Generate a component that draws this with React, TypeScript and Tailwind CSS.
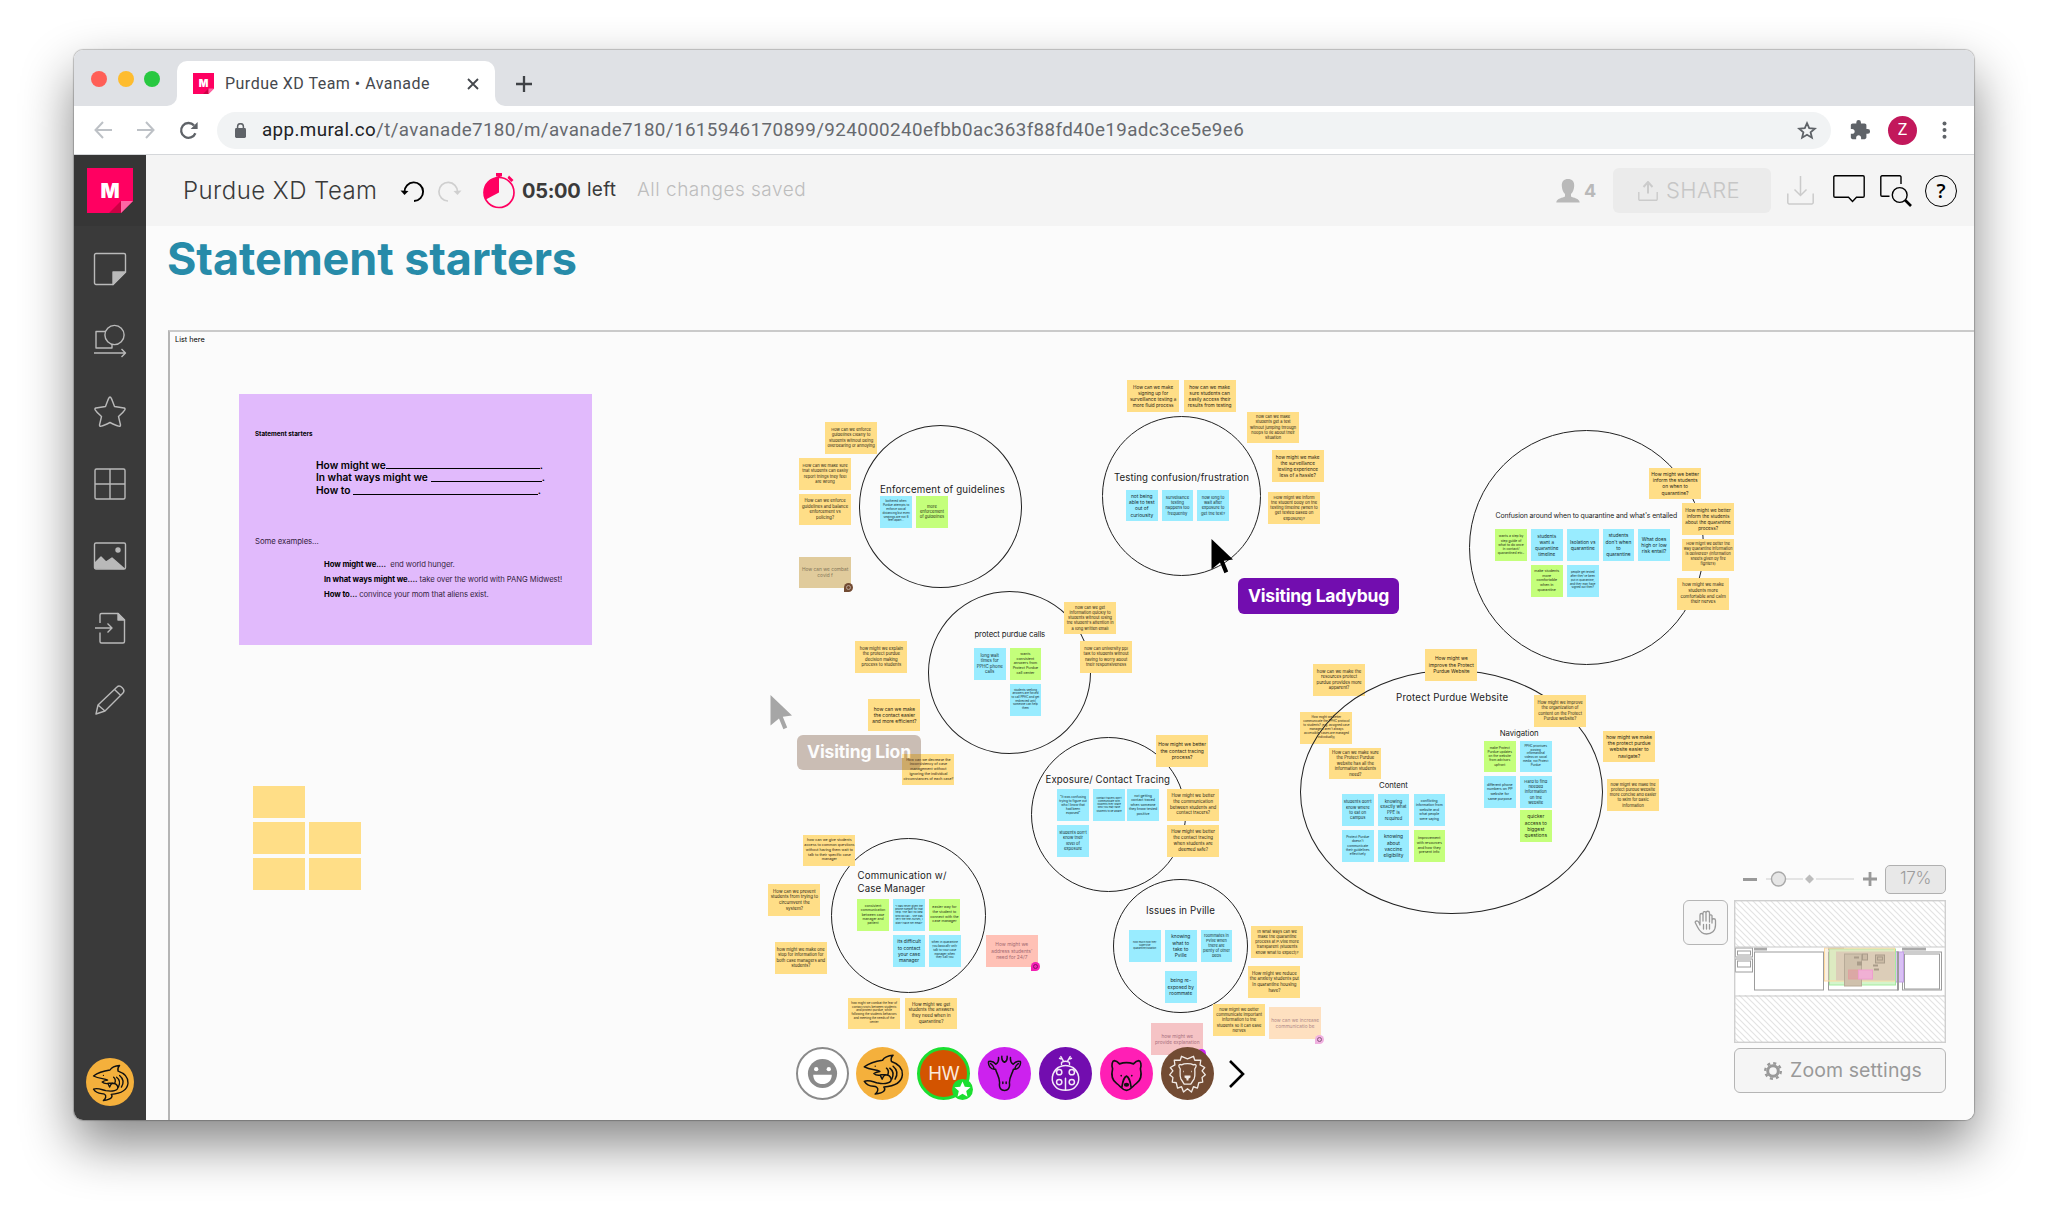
import React from "react";

type NoteData = [x: number, y: number, pitch: number, text: string];

const yellowUnder: NoteData[] = [
  [1313, 664, 5.6, "how can we make the|resources protect|purdue provides more|apparent?"],
  [1300.3, 712, 3.9, "How might we better|communicate the PPHC protocol|to students? (e.g. assigned case|managers aren't always|accessible, cases are managed|individually)"],
];

const yellow: NoteData[] = [
  [253, 786.3, 6, ""],
  [253, 822.2, 6, ""],
  [253, 858, 6, ""],
  [309.3, 822.2, 6, ""],
  [309.3, 858, 6, ""],
  [825, 422, 5.3, "How can we enforce|guidelines clearly to|students without being|overbearing or annoying"],
  [799, 458, 5.3, "How can we make sure|that students can easily|report things they feel|are wrong"],
  [799, 493.7, 5.5, "How can we enforce|guidelines and balance|enforcement vs|policing?"],
  [1064, 602, 5.2, "how can we get|information quickly to|students without losing|the student's attention in|a long written email"],
  [1080, 641, 5.3, "how can university ppl|talk to students without|having to worry about|their responsiveness"],
  [855.3, 641, 5.5, "how might we explain|the protect purdue|decision making|process to students"],
  [868.3, 699.4, 6.3, "how can we make|the contact easier|and more efficient?"],
  [902.3, 753.8, 4.7, "How can we decrease the|inconsistency of case|management without|ignoring the individual|circumstances of each case?"],
  [1127, 380.3, 6, "How can we make|signing up for|surveillance testing a|more fluid process"],
  [1183.5, 380.3, 6.2, "how can we make|sure students can|easily access their|results from testing"],
  [1247, 411.5, 5.2, "how can we make|students get a test|without jumping through|hoops to lie about their|situation"],
  [1271.6, 450.2, 6, "how might we make|the surveillance|testing experience|less of a hassle?"],
  [1268, 492, 5.3, "How might we inform|the student body on the|testing timeline (when to|get tested based on|exposure)?"],
  [1649, 467.5, 6.3, "How might we better|inform the students|on when to|quarantine?"],
  [1682, 503.3, 6, "How might we better|inform the students|about the quarantine|process?"],
  [1682, 539, 4.9, "How might we better the|way quarantine information|is delivered? (information|sheets given by fire|fighters)"],
  [1677, 578, 5.7, "how might we make|students more|comfortable and calm|their nerves"],
  [1425.3, 649, 6.3, "How might we|improve the Protect|Purdue Website"],
  [1329.3, 747.5, 5.5, "How can we make sure|the Protect Purdue|website has all the|information students|need?"],
  [1534, 695, 5.4, "How might we improve|the organization of|content on the Protect|Purdue website?"],
  [1603, 730.7, 6.3, "how might we make|the protect purdue|website easier to|navigate?"],
  [1607, 779, 5.2, "how might we make the|protect purdue website|more concise and easier|to skim for basic|information"],
  [1156, 735, 6.3, "How might we better|the contact tracing|process?"],
  [1167, 789, 5.7, "How might we better|the communication|between students and|contact tracers?"],
  [1167, 825, 5.8, "How might we better|the contact tracing|when students are|deemed safe?"],
  [803.3, 834.5, 4.7, "how can we give students|access to common questions|without having them wait to|talk to their specific case|manager"],
  [768.3, 884.3, 5.7, "How can we prevent|students from trying to|circumvent the|system?"],
  [774.7, 942, 5.4, "how might we make one|stop for information for|both case managers and|students?"],
  [848, 997.5, 3.8, "how might we combat the fear of|contact/visits between students|and protect purdue, while|following the students behaviors|and meeting the needs of the|center"],
  [905, 997.5, 5.8, "How might we get|students the answers|they need when in|quarantine?"],
  [1251, 926, 5.2, "In what ways can we|make the quarantine|process at P.Ville more|transparent (students|know what to expect)?"],
  [1248.3, 966.3, 5.6, "How might we reduce|the anxiety students put|in quarantine housing|have?"],
  [1213, 1004.2, 5.3, "how might we better|communicate important|information to the|students so it can ease|nerves"],
];

const blue: NoteData[] = [
  [880.3, 496, 3.8, "bothered when|Purdue attempts to|enforce social|distancing but even|seatings are not 6|feet apart..."],
  [974, 648, 5.6, "long wait|times for|PPHC phone|calls"],
  [1009.7, 684, 3.7, "students seeking|answers are forced|to call PPHC and get|redirected until|someone can help|them"],
  [1126, 489.5, 6.3, "not being|able to test|out of|curiousity"],
  [1161.7, 489.5, 5.3, "surveillance|testing|happens too|frequently"],
  [1197.3, 489.5, 5.3, "how long to|wait after|exposure to|get the test?"],
  [1531, 529.3, 6, "students|want a|quarantine|timeline"],
  [1567, 529.3, 6.2, "Isolation vs|quarantine"],
  [1602.7, 529.3, 6.3, "students|don't when|to|quarantine"],
  [1638.3, 529.3, 6.3, "What does|high or low|risk entail?"],
  [1567, 565, 3.7, "people get tested|after they've been|put in quarantine,|and they may have|signed out then?"],
  [1520, 740.5, 3.8, "PPHC prioritizes|posting|informational|videos on social|media, not Protect|Purdue"],
  [1484, 776.3, 4.6, "different phone|numbers on PP|website for|same purpose"],
  [1520, 776.3, 5.3, "Hard to find|needed|information|on the|website"],
  [1342, 794.3, 5.3, "students don't|know where|to eat on|campus"],
  [1377.7, 794.3, 5.7, "knowing|exactly what|PPE is|required"],
  [1413.5, 794.3, 4.4, "conflicting|information from|website and|what people|were saying"],
  [1342, 830, 4.2, "Protect Purdue|doesn't|communicate|their guidelines|effectively"],
  [1377.7, 830, 6.2, "knowing|about|vaccine|eligibility"],
  [1057.3, 789, 4.1, "\"It was confusing|trying to figure out|who I know that|had been|exposed\""],
  [1093.3, 789, 3.3, "contact tracers don't|communicate with|students they share|who you may have|students to be aware"],
  [1127.3, 789, 4.5, "not getting|contact traced|when someone|they know tested|positive"],
  [1057.3, 825, 5.3, "students don't|know their|level of|exposure"],
  [893.3, 899, 3.4, "\"I was never given the|phone number for that|help. The fact no idea|who do call... she was|very the tele-nurses, I|didn't have her email\""],
  [893.3, 935, 6.2, "its difficult|to contact|your case|manager"],
  [929, 935, 3.8, "when in quarantine|you basically only|talk to your case|manager when|they call you"],
  [1129, 930, 3.2, "how much how they|supervise|quarantine/isolation"],
  [1165, 930, 6.2, "knowing|what to|take to|Pville"],
  [1200.7, 930, 5, "roommates in|Pville when|there are|plenty of other|beds"],
  [1165, 971, 6.2, "being re-|exposed by|roommate"],
];

const green: NoteData[] = [
  [916.2, 496, 5.2, "more|enforcement|of guidelines"],
  [1009.7, 648, 4.7, "wants|consistent|answers from|Protect Purdue|call center"],
  [1495.3, 529.3, 4.3, "wants a step by|step guide of|what to do once|in contact/|quarantined etc.."],
  [1531, 565, 4.7, "make students|more|comfortable|when in|quarantine"],
  [1484, 740.5, 4.2, "make Protect|Purdue updates|on the website|from advisors|upfront"],
  [1520, 810.2, 6.3, "quicker|access to|biggest|questions"],
  [1413.5, 830, 4.7, "improvement|with resources|and how they|present info"],
  [857.3, 899, 4.4, "consistent|communication|between case|manager and|patient"],
  [928.7, 899, 4.7, "easier way for|the student to|connect with the|case manager"],
];

const circles: [number, number, number, number][] = [
  [858.6, 425, 163.5, 163],
  [928.2, 590.7, 163.3, 163],
  [1101.6, 416.3, 159.4, 159.4],
  [1469, 429.5, 235.4, 235.4],
  [1300, 669.5, 303, 244.5],
  [1031, 737.3, 155, 155],
  [831, 838.3, 155, 155],
  [1113.4, 879, 134.3, 134.3],
];

/* x, baseline, font size, letter spacing, text */
const labels: [number, number, number, number, string][] = [
  [880, 493, 9.7, 0.2, "Enforcement of guidelines"],
  [974.5, 637.5, 7.8, -0.15, "protect purdue calls"],
  [1114, 481.5, 9.7, 0.09, "Testing confusion/frustration"],
  [1495.5, 519.3, 6.9, -0.12, "Confusion around when to quarantine and what's entailed"],
  [1396, 701, 9.7, 0.2, "Protect Purdue Website"],
  [1499.7, 736, 7.8, -0.03, "Navigation"],
  [1379, 788.5, 7.8, -0.05, "Content"],
  [1045.5, 783, 9.7, 0.1, "Exposure/ Contact Tracing"],
  [857.5, 879, 9.7, 0.2, "Communication w/"],
  [857.5, 892, 9.7, 0.1, "Case Manager"],
  [1146, 914.5, 9.7, 0.12, "Issues in Pville"],
];

function Note({ data, kind }: { data: NoteData; kind: string }) {
  const [x, y, pitch, text] = data;
  return (
    <div
      className={`absolute flex h-[31.5px] flex-col items-center justify-center whitespace-nowrap text-center ${kind}`}
      style={{ left: x, top: y, fontSize: pitch * 0.775, lineHeight: `${pitch}px` }}
    >
      {text.split("|").map((line, i) => (
        <span key={i}>{line}</span>
      ))}
    </div>
  );
}

const YELLOW = "w-[52.2px] bg-[#ffde87] text-[#2b2413]";
const BLUE = "w-[31.5px] bg-[#99ecff] text-[#132b30]";
const GREEN = "w-[31.5px] bg-[#c4ff7b] text-[#1f2b12]";

function Shark({ className }: { className: string }) {
  return (
    <svg viewBox="0 0 160 160" className={className} fill="none" stroke="#111" strokeWidth="4.5" strokeLinejoin="round" strokeLinecap="round">
      <circle cx="80" cy="80" r="80" fill="#f4b03c" stroke="none" />
      <path d="M25 60C38 50 58 43 80 40C86 30 98 26 112 25C106 31 105 38 107 44C128 51 141 66 140 84C138 104 118 118 84 121C90 128 88 138 58 142C66 135 69 126 62 121C54 116 38 124 25 104C38 98 50 105 66 109C88 113 108 109 106 96C102 84 92 84 88 84C84 86 80 94 79 97L73 85C66 86 58 84 54 80C60 76 64 75 72 74C62 68 44 70 25 60Z" />
      <path d="M96 84C99 76 97 68 92 64M108 97C114 84 113 72 102 64M118 97C127 82 124 68 112 58M75 84h12" />
      <circle cx="58" cy="58" r="2" fill="#111" stroke="none" />
    </svg>
  );
}

function Logo({ className }: { className: string }) {
  return (
    <span className={`relative flex items-center justify-center ${className}`}>
      <svg viewBox="0 0 46 45" preserveAspectRatio="none" className="absolute inset-0 h-full w-full">
        <path d="M0 0H46V33L34 45H0Z" fill="#ff0061" />
        <path d="M22 45L34 33V45Z" fill="#cc0044" />
        <path d="M34 33H46L34 45Z" fill="#ff66a5" />
      </svg>
      <span className="relative">M</span>
    </span>
  );
}

function Pointer({ x, y, color }: { x: number; y: number; color: string }) {
  return (
    <svg className={`absolute h-[36px] w-[23px] ${color}`} style={{ left: x, top: y }} viewBox="0 0 23 36" fill="currentColor">
      <path d="M.5 0L22 20.5L12.8 21.8L17.2 32.4L13.4 34.2L9 23.4L.5 30.5Z" />
    </svg>
  );
}

function TabStrip() {
  return (
    <div className="flex h-[56px] shrink-0 items-end bg-[#dfe1e5] font-[Roboto,sans-serif]">
      <div className="flex h-[56px] w-[93px] items-center gap-[10.5px] pl-[17px] pt-0.5">
        <span className="size-4 rounded-full bg-[#ff5f57]" />
        <span className="size-4 rounded-full bg-[#febc2e]" />
        <span className="size-4 rounded-full bg-[#28c840]" />
      </div>
      <div className="size-[10px] bg-white"><div className="size-[10px] rounded-br-[10px] bg-[#dfe1e5]" /></div>
      <div className="flex h-[45px] w-[318px] items-center rounded-t-[10px] bg-white pl-4">
        <Logo className="h-[21px] w-[21px] font-[Inter,sans-serif] text-[10px] font-black text-white" />
        <span className="ml-[11px] w-[242px] whitespace-nowrap text-[16px] tracking-[0.48px] text-[#45484d]">Purdue XD Team • Avanade</span>
        <svg className="size-3 shrink-0" viewBox="0 0 12 12" stroke="#45484d" strokeWidth="1.8"><path d="M1 1L11 11M11 1L1 11" /></svg>
      </div>
      <div className="size-[10px] bg-white"><div className="size-[10px] rounded-bl-[10px] bg-[#dfe1e5]" /></div>
      <svg className="mb-[14px] ml-[11px] size-4" viewBox="0 0 16 16" stroke="#3f4246" strokeWidth="2.3"><path d="M8 0V16M0 8H16" /></svg>
    </div>
  );
}

function AddressBar() {
  return (
    <div className="flex h-[49px] shrink-0 items-center border-b border-[#d5d7da] bg-white font-[Roboto,sans-serif]">
      <svg className="ml-[20px] h-[18px] w-[18px]" viewBox="0 0 18 18" fill="none" stroke="#bdc1c6" strokeWidth="2"><path d="M18 9H1.5M9 1L1.5 9L9 17" /></svg>
      <svg className="ml-[25px] h-[18px] w-[18px]" viewBox="0 0 18 18" fill="none" stroke="#bdc1c6" strokeWidth="2"><path d="M0 9H16.5M9 1L16.5 9L9 17" /></svg>
      <svg className="ml-[24px] h-[19px] w-[19px]" viewBox="0 0 19 19" fill="none" stroke="#5f6368" strokeWidth="2.3"><path d="M16.4 12.2A7.4 7.4 0 1 1 15 4.4" /><path d="M18.6 1V8H11.6Z" fill="#5f6368" stroke="none" /></svg>
      <div className="ml-[19px] flex h-[37px] w-[1614px] items-center rounded-full bg-[#f1f3f4]">
        <svg className="ml-[18px] h-[15px] w-[11px]" viewBox="0 0 11 15" fill="#5f6368"><rect y="5" width="11" height="10" rx="1.4" /><path d="M2.6 6V3.6a2.9 2.9 0 0 1 5.8 0V6" fill="none" stroke="#5f6368" strokeWidth="1.5" /></svg>
        <span className="ml-4 flex-1 whitespace-nowrap pt-px text-[18.8px] tracking-[0.39px] text-[#66696e]"><span className="text-[#202124]">app.mural.co</span>/t/avanade7180/m/avanade7180/1615946170899/924000240efbb0ac363f88fd40e19adc3ce5e9e6</span>
        <svg className="mr-[14px] h-[19px] w-[20px]" viewBox="0 0 20 19" fill="none" stroke="#5f6368" strokeWidth="1.8"><path d="M10 2.2L12.2 7.2L17.8 7.7L13.6 11.3L14.9 16.7L10 13.8L5.1 16.7L6.4 11.3L2.2 7.7L7.8 7.2Z" /></svg>
      </div>
      <svg className="ml-[18px] size-[22px]" viewBox="0 0 24 24" fill="#5f6368"><path d="M20.5 11H19V7c0-1.1-.9-2-2-2h-4V3.5a2.5 2.5 0 0 0-5 0V5H4c-1.1 0-2 .9-2 2v3.8h1.5c1.5 0 2.7 1.2 2.7 2.7S5 16.2 3.5 16.2H2V20c0 1.1.9 2 2 2h3.8v-1.5c0-1.5 1.2-2.7 2.7-2.7s2.7 1.2 2.7 2.7V22H17c1.1 0 2-.9 2-2v-4h1.5a2.5 2.5 0 0 0 0-5z" /></svg>
      <span className="ml-[17px] flex size-[29px] items-center justify-center rounded-full bg-[#c2185b] text-[16px] text-white">Z</span>
      <svg className="ml-[25px] h-[18px] w-[5px]" viewBox="0 0 5 18" fill="#5f6368"><circle cx="2.5" cy="2.5" r="2" /><circle cx="2.5" cy="9" r="2" /><circle cx="2.5" cy="15.8" r="2" /></svg>
    </div>
  );
}

function Tool({ children }: { children: React.ReactNode }) {
  return (
    <div className="flex h-[71.8px] items-center justify-center">
      <svg className="size-[34px]" viewBox="0 0 34 34" fill="none" stroke="#b9b9b9" strokeWidth="1.4" strokeLinejoin="round">{children}</svg>
    </div>
  );
}

function Sidebar() {
  return (
    <div className="flex w-[72px] shrink-0 flex-col bg-[#3a3a3a]">
      <div className="flex h-[71px] shrink-0 items-center justify-center bg-[#363636]">
        <Logo className="h-[45px] w-[46px] font-[Inter,sans-serif] text-[20px] font-black text-white" />
      </div>
      <div className="flex flex-col pt-[7px]">
        <Tool><path d="M3 1.5H31a1.5 1.5 0 0 1 1.5 1.5V20L20 32.5H3A1.5 1.5 0 0 1 1.5 31V3A1.5 1.5 0 0 1 3 1.5Z" /><path d="M20 20H32.5L20 32.5Z" fill="#b9b9b9" /></Tool>
        <Tool><path d="M13 7.5H3V24H19V20" /><circle cx="21.5" cy="11" r="9.6" /><path d="M1 29H32M28.5 25L32.5 29L28.5 33" /></Tool>
        <Tool><path d="M17 2C18 2 18.4 3 21.5 11.5L31 13C33 13.5 33 14.5 25.5 21.5L27.5 30C27.5 32 26 32 17 27.5C8 32 6.5 32 6.5 30L8.5 21.5C1 14.5 1 13.5 3 13L12.5 11.5C15.6 3 16 2 17 2Z" /></Tool>
        <Tool><rect x="2" y="2" width="30" height="30" rx="1.5" /><path d="M17 2V32M2 17H32" /></Tool>
        <Tool><rect x="1.5" y="4" width="31" height="26" rx="1.5" /><path d="M2 29V24L8 18L13 23L19 19L31 29.5Z" fill="#b9b9b9" /><circle cx="25" cy="11" r="2" fill="#b9b9b9" /></Tool>
        <Tool><path d="M7 12V4A1.5 1.5 0 0 1 8.5 2.5H25L31.5 9V30.5A1.5 1.5 0 0 1 30 32H8.5A1.5 1.5 0 0 1 7 30.5V21.5M2 17H19M14.5 12.5L19 17L14.5 21.5" /><path d="M25 2.5V9H31.5Z" fill="#b9b9b9" /></Tool>
        <Tool><path d="M3 31L5 22L24 4C27 1 33 7 30 10L12 28L3 31ZM21.5 6.5L27.8 12.5M5 22L12 28" /></Tool>
      </div>
      <div className="mt-auto flex justify-center pb-[14px]"><Shark className="size-[48px]" /></div>
    </div>
  );
}

function Header() {
  return (
    <div className="flex h-[71px] shrink-0 items-center whitespace-nowrap bg-[#f4f4f4] pl-[37px] text-[#3a3a3a]">
      <span className="w-[217px] text-[24px] font-light tracking-[0.45px]">Purdue XD Team</span>
      <svg className="h-[22px] w-[25px]" viewBox="0 0 25 22" fill="none" stroke="#000" strokeWidth="1.9"><path d="M4.5 12A9.3 9.3 0 1 1 14 21" /><path d="M.5 10.5L4.5 15L8.5 11Z" fill="#000" stroke="none" /></svg>
      <svg className="ml-[12px] h-[22px] w-[25px]" viewBox="0 0 25 22" fill="none" stroke="#cfcfcf" strokeWidth="1.7"><path d="M20.5 12A9.3 9.3 0 1 0 11 21" /><path d="M24.5 10.5L20.5 15L16.5 11Z" fill="#cfcfcf" stroke="none" /></svg>
      <svg className="ml-[21px] h-[36px] w-[32px]" viewBox="0 0 32 36"><circle cx="16" cy="19.5" r="15" fill="none" stroke="#ff0061" strokeWidth="1.7" /><path d="M16 19.5V4.5A15 15 0 0 0 2.8 26.5Z" fill="#ff0061" /><path d="M13 0h6v3.5h-1.5V5h-3V3.5H13ZM26 2.5L30.5 7L28.5 9L24.5 5Z" fill="#ff0061" /></svg>
      <span className="ml-[7px] w-[65px] text-[20px] font-bold tracking-[-0.3px]">05:00</span>
      <span className="w-[50px] text-[19px] font-normal tracking-[0.25px]">left</span>
      <span className="text-[19px] font-light tracking-[0.5px] text-[#bdbdbd]">All changes saved</span>
      <div className="ml-auto flex items-center pr-[17px]">
        <svg className="h-[24px] w-[24px]" viewBox="0 0 24 24" fill="#b9b9b9"><path d="M12 0C8 0 5.5 2.5 5.8 7C6 11 7.5 13.5 9 15V17.5C7 19 .5 19 .3 23.5H23.7C23.5 19 17 19 15 17.5V15C16.5 13.5 18 11 18.2 7C18.5 2.5 16 0 12 0Z" /></svg>
        <span className="ml-1 w-[29px] text-[18px] font-bold text-[#b9b9b9]">4</span>
        <div className="flex h-[45px] w-[158px] items-center rounded-md bg-[#ebebeb] pl-[25px] text-[#c6c6c6]">
          <svg className="h-[20px] w-[20px]" viewBox="0 0 20 20" fill="none" stroke="#cbcbcb" strokeWidth="1.4"><path d="M.8 11V18A1.2 1.2 0 0 0 2 19.3H18A1.2 1.2 0 0 0 19.2 18V11" /><path d="M10 12.5V3M5.5 6L10 1L14.5 6" strokeWidth="2" /></svg>
          <span className="ml-2 text-[22px] font-light tracking-[0.4px]">SHARE</span>
        </div>
        <svg className="ml-4 h-[29px] w-[27px]" viewBox="0 0 27 29" fill="none" stroke="#cbcbcb" strokeWidth="1.5"><path d="M.8 17.5V26.5A1.5 1.5 0 0 0 2.3 28H24.7A1.5 1.5 0 0 0 26.2 26.5V17.5M13.5 0V19.5M7.5 13.5L13.5 19.5L19.5 13.5" /></svg>
        <svg className="ml-[19px] h-[32px] w-[32px]" viewBox="0 0 32 32" fill="none" stroke="#000" strokeWidth="1.4"><path d="M2 .8H30A1.2 1.2 0 0 1 31.2 2V21A1.2 1.2 0 0 1 30 22.2H23.5L19.5 26.5L15.5 22.2H2A1.2 1.2 0 0 1 .8 21V2A1.2 1.2 0 0 1 2 .8Z" /></svg>
        <svg className="ml-[15px] h-[32px] w-[32px]" viewBox="0 0 32 32" fill="none" stroke="#000" strokeWidth="1.4"><path d="M21 9V2A1.2 1.2 0 0 0 19.8.8H2A1.2 1.2 0 0 0 .8 2V20A1.2 1.2 0 0 0 2 21.2H9.5" /><circle cx="19.7" cy="20" r="7.4" /><path d="M25 25L31 31" strokeWidth="2.6" /></svg>
        <span className="ml-[13px] flex size-[32px] items-center justify-center rounded-full border-[1.5px] border-black font-[Open_Sans,sans-serif] text-[20px] font-semibold text-black">?</span>
      </div>
    </div>
  );
}

function PurpleCard() {
  return (
    <div className="absolute left-[239px] top-[394px] h-[251px] w-[353px] whitespace-nowrap bg-[#e1bafc] pl-4 text-black">
      <p className="mt-[36px] text-[6.3px] font-bold leading-[9px]">Statement starters</p>
      <div className="mt-[19.5px] pl-[61px] text-[10.2px] font-semibold leading-[12.9px]">
        <p className="flex w-[227px] items-end">How might we<span className="mb-[2px] h-px flex-1 bg-black" />.</p>
        <p className="flex w-[229px] items-end">In what ways might we<span className="mb-[2px] ml-[3px] h-px flex-1 bg-black" />.</p>
        <p className="flex w-[225px] items-end">How to<span className="mb-[2px] ml-[3px] h-px flex-1 bg-black" />.</p>
      </div>
      <p className="mt-[38px] text-[7.8px] leading-[12px] tracking-[-0.1px] text-[#35243f]">Some examples...</p>
      <div className="mt-[10px] pl-[69px] text-[7.7px] leading-[15px] tracking-[-0.08px] text-[#35243f]">
        <p><b className="font-bold text-black">How might we....</b>&nbsp; end world hunger.</p>
        <p><b className="font-bold text-black">In what ways might we....</b> take over the world with PANG Midwest!</p>
        <p><b className="font-bold text-black">How to...</b> convince your mom that aliens exist.</p>
      </div>
    </div>
  );
}

function Circle({ c }: { c: [number, number, number, number] }) {
  return <div className="absolute rounded-[50%] border border-[#222]" style={{ left: c[0], top: c[1], width: c[2], height: c[3] }} />;
}

function Board() {
  return (
    <div className="absolute -left-[146px] -top-[226px] h-[1120px] w-[1974px]">
      <h1 className="absolute left-[167px] top-[229px] whitespace-nowrap text-[45px] font-bold leading-[60px] tracking-[-0.1px] text-[#278ba9]">Statement starters</h1>
      <div className="absolute left-[168px] top-[330px] h-[800px] w-[1820px] border-l-2 border-t-2 border-l-[#b5b5b5] border-t-[#cacaca]">
        <span className="absolute left-[5px] top-[2.5px] whitespace-nowrap text-[7.3px] leading-[10px] text-black">List here</span>
      </div>
      <PurpleCard />
      {yellowUnder.map((n, i) => <Note key={i} data={n} kind={YELLOW} />)}
      {circles.map((c, i) => <Circle key={i} c={c} />)}
      {yellow.map((n, i) => <Note key={i} data={n} kind={YELLOW} />)}
      {blue.map((n, i) => <Note key={i} data={n} kind={BLUE} />)}
      {green.map((n, i) => <Note key={i} data={n} kind={GREEN} />)}
      <Note data={[799, 556.5, 6.2, "How can we combat|covid f"]} kind="w-[52.2px] bg-[#e0cb9c] text-[#85775a]" />
      <Note data={[985.7, 935, 6.3, "How might we|address students'|need for 24/7"]} kind="w-[52.2px] bg-[#ffc1b6] text-[#a36a72]" />
      <Note data={[1269, 1007.3, 6.2, "how can we increase|communicatio be"]} kind="w-[52.2px] bg-[#fee0c0] text-[#b08a8a]" />
      <Note data={[1151.2, 1023, 6.2, "how might we|provide explanation"]} kind="w-[52.2px] bg-[#f5c3c5] text-[#a9717f]" />
      <span className="absolute left-[844px] top-[583px] size-[9px] rounded-full rounded-bl-none bg-[#724b33]"><span className="absolute inset-[2px] rounded-full border border-[#b9a496]" /></span>
      <span className="absolute left-[1031px] top-[962px] size-[9px] rounded-full rounded-bl-none bg-[#f31fb3]"><span className="absolute inset-[2px] rounded-full border border-[#8a1268]" /></span>
      <span className="absolute left-[1315px] top-[1035px] size-[9px] rounded-full rounded-bl-none bg-[#f0b0e0]"><span className="absolute inset-[2px] rounded-full border border-[#8a5a80]" /></span>
      <span className="absolute left-[1197px] top-[1049px] size-[9px] rounded-full bg-[#cc22ee]" />
      {labels.map(([x, base, size, track, text]) => (
        <span key={text} className="absolute whitespace-nowrap text-[#1c1c1c]" style={{ left: x, top: base - 13.5, fontSize: size, letterSpacing: track, lineHeight: "20px" }}>{text}</span>
      ))}
      <Pointer x={770} y={695} color="text-[#a6a6a6]" />
      <div className="absolute left-[797px] top-[735px] flex h-[35px] w-[124px] items-center justify-center rounded-[6px] bg-[#724b33] text-[17.5px] font-bold tracking-[-0.15px] text-white opacity-35">Visiting Lion</div>
      <Pointer x={1211} y={539} color="text-black" />
      <div className="absolute left-[1238px] top-[578px] flex h-[36px] w-[161px] items-center justify-center rounded-[6px] bg-[#720daf] text-[17.5px] font-bold tracking-[-0.2px] text-white">Visiting Ladybug</div>
    </div>
  );
}

function Avatars() {
  return (
    <div className="absolute left-[649.5px] top-[821px] flex items-center gap-[7.9px]">
      <svg className="size-[53px]" viewBox="0 0 160 160"><circle cx="80" cy="80" r="77" fill="#fff" stroke="#8a8a8a" strokeWidth="6" /><circle cx="80" cy="80" r="44" fill="#8a8a8a" /><circle cx="61" cy="67" r="6.5" fill="#fff" /><circle cx="99" cy="67" r="6.5" fill="#fff" /><path d="M52 84H108C108 103 95 112 80 112S52 103 52 84Z" fill="#fff" /></svg>
      <Shark className="size-[53px]" />
      <span className="relative flex size-[53px] items-center justify-center rounded-full border-[3px] border-[#1bdf30] bg-[#d35400] text-[18.5px] tracking-[-0.4px] text-[#fbe9dc]">
        HW
        <svg className="absolute -bottom-[3px] -right-[6px] size-[21px]" viewBox="0 0 21 21"><circle cx="10.5" cy="10.5" r="10.5" fill="#1bdf30" /><path d="M10.5 2.5L12.8 7.8L18.5 8.3L14.2 12.1L15.5 17.8L10.5 14.8L5.5 17.8L6.8 12.1L2.5 8.3L8.2 7.8Z" fill="#fff" /></svg>
      </span>
      <svg className="size-[53px]" viewBox="0 0 160 160" fill="none" stroke="#111" strokeWidth="4.5" strokeLinecap="round" strokeLinejoin="round"><circle cx="80" cy="80" r="80" fill="#cc22ee" stroke="none" /><path d="M72 28C71 38 72 43 80 46C88 43 89 38 88 28M62 32C63 42 60 48 54 52M98 32C97 42 100 48 106 52M54 52C49 46 40 42 32 44C30 56 38 69 53 67C57 82 67 94 65 110C63 125 70 131 80 131S97 125 95 110C93 94 103 82 107 67C122 69 130 56 128 44C120 42 111 46 106 52M38 50C44 54 47 58 48 63M122 50C116 54 113 58 112 63" /><path d="M75 106V110M85 106V110" /></svg>
      <svg className="size-[53px]" viewBox="0 0 160 160" fill="none" stroke="#f3eaf8" strokeWidth="4.5" strokeLinecap="round"><circle cx="80" cy="80" r="80" fill="#720daf" stroke="none" /><path d="M68 52C64 40 96 40 92 52M73 41L66 29M87 41L94 29M66 36L62 34M94 36L98 34M80 94V130M46 76C54 62 64 56 80 56S106 62 114 76M57 62C38 76 34 104 50 120C62 134 98 134 110 120C126 104 122 76 103 62" /><circle cx="61" cy="76" r="8" /><circle cx="99" cy="76" r="8" /><circle cx="61" cy="106" r="8" /><circle cx="99" cy="106" r="8" /></svg>
      <svg className="size-[53px]" viewBox="0 0 160 160" fill="none" stroke="#111" strokeWidth="5" strokeLinejoin="round" strokeLinecap="round"><circle cx="80" cy="80" r="80" fill="#ff1fb5" stroke="none" /><path d="M80 131C66 130 63 119 50 110C36 100 34 82 38 66C34 54 37 42 43 41C50 41 54 45 59 51C72 46 88 46 101 51C106 45 110 41 117 41C123 42 126 54 122 66C126 82 124 100 110 110C97 119 94 130 80 131ZM66 122C68 106 74 90 80 88C86 90 92 106 94 122" /><ellipse cx="80" cy="114" rx="8" ry="6" fill="#111" stroke="none" /><path d="M64 86V87M96 86V87" /></svg>
      <svg className="size-[53px]" viewBox="0 0 160 160" fill="none" stroke="#f1eae5" strokeWidth="4" strokeLinejoin="round"><circle cx="80" cy="80" r="80" fill="#724b33" stroke="none" /><path d="M80 36L62 28L58 40L40 40L42 54L28 62L36 72L26 84L36 92L34 106L46 108L50 124L62 120L68 136L80 126L92 136L98 120L110 124L114 108L126 106L124 92L134 84L124 72L132 62L118 54L120 40L102 40L98 28Z" /><path d="M62 54C70 49 90 49 98 54C108 50 108 58 102 66C102 80 104 88 100 96L90 112H70L60 96C56 88 58 80 58 66C52 58 52 50 62 54Z" /><path d="M67 74h2M91 74h2" /><path d="M71 86H89V92L83 96V101H77V96L71 92Z" fill="#f1eae5" stroke="none" /></svg>
      <svg className="ml-[7px] h-[28px] w-[16px]" viewBox="0 0 16 28" fill="none" stroke="#000" strokeWidth="2.6"><path d="M1 1L14 14L1 27" /></svg>
    </div>
  );
}

const rects: [number, number, number, number, string, string][] = [
  [1, 0, 17, 9, "#fff", "#9c9c9c"], [3, 3, 13, 4, "#fff", "#9c9c9c"],
  [1, 11, 17, 13, "#fff", "#9c9c9c"], [3, 13, 13, 6, "#fff", "#9c9c9c"],
  [20, 4, 69, 38, "#fff", "#9c9c9c"], [94, 4, 69, 38, "#fff", "#9c9c9c"],
  [168, 4, 39, 38, "#fff", "#9c9c9c"], [170, 6, 35, 35, "#fff", "#9c9c9c"],
  [20, 0, 12, 2, "#aaa", "#aaa"], [94, 0, 15, 2, "#aaa", "#aaa"], [168, 0, 23, 2, "#aaa", "#aaa"],
  [102, 4, 67, 30, "#d9c0f5", "#c4a0e8"], [163, 4, 1, 38, "#9c9c9c", "#9c9c9c"],
  [95, 1, 66, 36, "#d4f5cc", "#a4eba0"],
  [90, 0, 70, 33, "#ecd8b060", "#ffd9a0"],
  [102, 4, 58, 28, "#dccdb8", "#dccdb8"], [110, 6, 17, 32, "#cfc1ac", "#b8ab98"],
  [114, 22, 12, 9, "#dba8a5", "#dfa39f"], [124, 22, 14, 9, "#f0b0d4", "#ef9fce"],
  [128, 6, 5, 6, "#cbbba6", "#a99c8a"], [141, 7, 9, 8, "#cbbba6", "#a99c8a"], [143, 9, 5, 3, "#cbbba6", "#a99c8a"],
  [120, 9, 4, 1, "#a99c8a", "#a99c8a"], [123, 14, 4, 3, "#a99c8a", "#a99c8a"], [139, 17, 4, 1, "#a99c8a", "#a99c8a"], [140, 21, 4, 1, "#a99c8a", "#a99c8a"],
];

function Navigator() {
  return (
    <div className="absolute bottom-[27px] right-[28px] flex w-[264px] flex-col items-end text-[#999]">
      <div className="flex h-[29px] items-center">
        <span className="h-[3px] w-[14px] bg-[#999]" />
        <svg className="ml-[9px] h-[18px] w-[90px]" viewBox="0 0 90 18"><path d="M0 9H37M50 9H88" stroke="#ddd" strokeWidth="1.3" /><circle cx="12.5" cy="9" r="7" fill="#e6e6e6" stroke="#a8a8a8" strokeWidth="1.4" /><path d="M43.5 4.5L48 9L43.5 13.5L39 9Z" fill="#bdbdbd" /></svg>
        <svg className="ml-[7px] size-[14px]" viewBox="0 0 14 14" stroke="#999" strokeWidth="2.8"><path d="M7 0V14M0 7H14" /></svg>
        <span className="ml-[8.5px] flex h-[29px] w-[61px] items-center justify-center rounded-[5px] border-[1.5px] border-[#b0b0b0] bg-[#e8e8e8] text-[17px] font-light tracking-[-0.4px] text-[#9c9c9c]">17%</span>
      </div>
      <div className="mt-[6.5px] flex items-start gap-[6.5px]">
        <span className="flex size-[45px] items-center justify-center rounded-[6px] border-[1.5px] border-[#b5b5b5] bg-[#f7f7f7]">
          <svg className="h-[25px] w-[23px]" viewBox="0 0 23 25" fill="none" stroke="#999" strokeWidth="1.3" strokeLinecap="round" strokeLinejoin="round"><path d="M6 15V5A1.5 1.5 0 0 1 9 5V11V3A1.6 1.6 0 0 1 12 2.5V11V3A1.5 1.5 0 0 1 15.5 3V12V5.5A1.5 1.5 0 0 1 18 5.5V13V10.5A1.5 1.5 0 0 1 21.5 10.5V15C21.5 21 17.5 24 12.5 24C7 24 5 20 3.5 17L1.2 12.5C1 11 3.5 10 5 12.5L6 15M9.5 14.5V19M12.5 14.5V19M15.5 14.5V19" /></svg>
        </span>
        <svg className="h-[143px] w-[212px]" viewBox="0 0 212 143">
          <defs><pattern id="hatch" width="6" height="6" patternUnits="userSpaceOnUse"><path d="M-1 -1L7 7M-1 5L1 7M5 -1L7 1" stroke="#e3e3e3" strokeWidth="1.2" /></pattern></defs>
          <rect x=".7" y=".7" width="210.6" height="141.6" fill="#fff" />
          <rect width="212" height="47" fill="url(#hatch)" /><rect y="95" width="212" height="48" fill="url(#hatch)" />
          <g transform="translate(0 47.5)">
            {rects.map(([x, y, w, h, fill, stroke], i) => <rect key={i} x={x + 0.5} y={y + 0.5} width={w} height={h} fill={fill} stroke={stroke} />)}
          </g>
          <path d="M0 47H212M0 96H212" stroke="#c9c9c9" />
          <rect x=".7" y=".7" width="210.6" height="141.6" fill="none" stroke="#cfcfcf" strokeWidth="1.4" />
        </svg>
      </div>
      <div className="mt-[5px] flex h-[45px] w-[212px] items-center justify-center rounded-[6px] border-[1.5px] border-[#b5b5b5] bg-[#f5f5f5] pl-[6px] pt-px text-[19.5px] tracking-[0.1px]">
        <svg className="mr-2 size-[18px]" viewBox="0 0 18 18" fill="none" stroke="#999"><circle cx="9" cy="9" r="5.3" strokeWidth="3" /><circle cx="9" cy="9" r="7.8" strokeWidth="2.4" strokeDasharray="3.06 3.06" /></svg>
        Zoom settings
      </div>
    </div>
  );
}

export default function App() {
  return (
    <div className="h-[1218px] w-[2048px] overflow-hidden bg-white pl-[74px] pt-[50px] font-[Inter,sans-serif]">
      <div className="flex h-[1070px] w-[1900px] flex-col overflow-hidden rounded-[9px] bg-[#fbfbfb] shadow-[0_0_1px_1px_rgba(0,0,0,0.22),0_24px_52px_rgba(0,0,0,0.48)]">
        <TabStrip />
        <AddressBar />
        <div className="flex min-h-0 flex-1">
          <Sidebar />
          <div className="flex min-w-0 flex-1 flex-col">
            <Header />
            <div className="relative min-h-0 flex-1 overflow-hidden bg-[#fbfbfb]">
              <Board />
              <Avatars />
              <Navigator />
            </div>
          </div>
        </div>
      </div>
    </div>
  );
}
